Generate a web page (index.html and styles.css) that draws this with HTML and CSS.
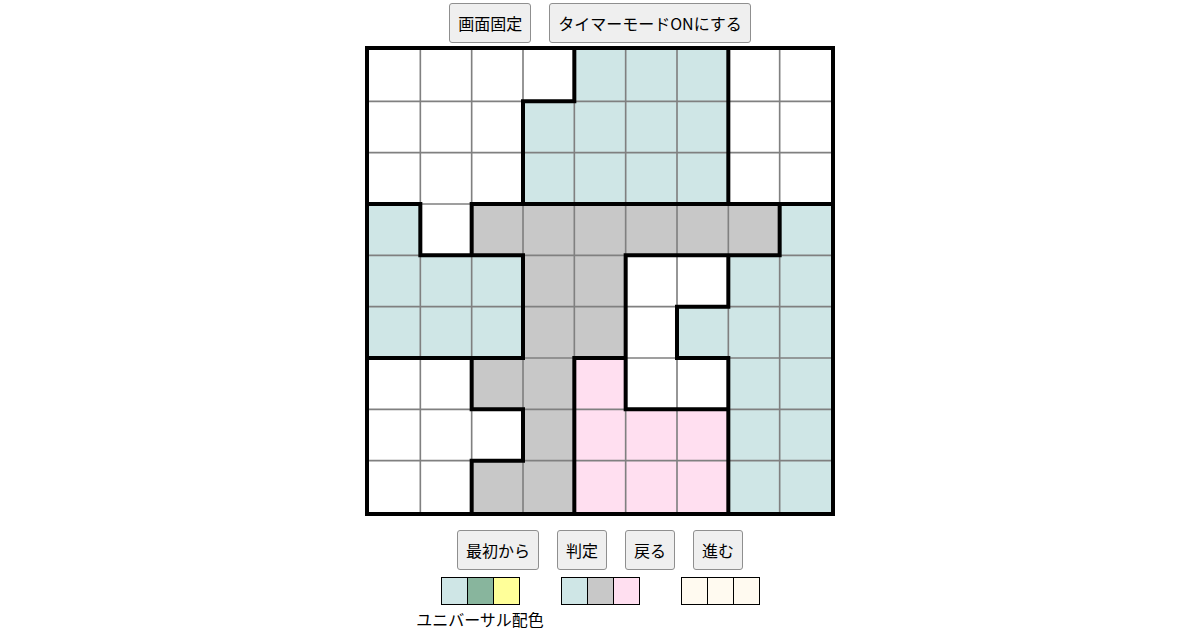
FILE: index.html
```html
<!DOCTYPE html>
<html lang="ja">
<head>
<meta charset="utf-8">
<title>パズル</title>
<link rel="stylesheet" href="styles.css">
</head>
<body>
<div class="page">
  <div class="toolbar top">
    <button class="btn">画面固定</button>
    <button class="btn">タイマーモードONにする</button>
  </div>

  <div class="board">
    <div class="cells">
      <div class="w"></div><div class="w"></div><div class="w"></div><div class="w"></div><div class="c"></div><div class="c"></div><div class="c"></div><div class="w"></div><div class="w"></div>
      <div class="w"></div><div class="w"></div><div class="w"></div><div class="c"></div><div class="c"></div><div class="c"></div><div class="c"></div><div class="w"></div><div class="w"></div>
      <div class="w"></div><div class="w"></div><div class="w"></div><div class="c"></div><div class="c"></div><div class="c"></div><div class="c"></div><div class="w"></div><div class="w"></div>
      <div class="c"></div><div class="w"></div><div class="g"></div><div class="g"></div><div class="g"></div><div class="g"></div><div class="g"></div><div class="g"></div><div class="c"></div>
      <div class="c"></div><div class="c"></div><div class="c"></div><div class="g"></div><div class="g"></div><div class="w"></div><div class="w"></div><div class="c"></div><div class="c"></div>
      <div class="c"></div><div class="c"></div><div class="c"></div><div class="g"></div><div class="g"></div><div class="w"></div><div class="c"></div><div class="c"></div><div class="c"></div>
      <div class="w"></div><div class="w"></div><div class="g"></div><div class="g"></div><div class="p"></div><div class="w"></div><div class="w"></div><div class="c"></div><div class="c"></div>
      <div class="w"></div><div class="w"></div><div class="w"></div><div class="g"></div><div class="p"></div><div class="p"></div><div class="p"></div><div class="c"></div><div class="c"></div>
      <div class="w"></div><div class="w"></div><div class="g"></div><div class="g"></div><div class="p"></div><div class="p"></div><div class="p"></div><div class="c"></div><div class="c"></div>
    </div>
    <svg class="lines" viewBox="0 0 9 9" preserveAspectRatio="none" aria-hidden="true">
      <path class="thin" d="M1 0V9M2 0V9M3 0V9M4 0V9M5 0V9M6 0V9M7 0V9M8 0V9M0 1H9M0 2H9M0 3H9M0 4H9M0 5H9M0 6H9M0 7H9M0 8H9"/>
      <path class="thick" d="M3 1H4M0 3H1M2 3H9M1 4H3M5 4H8M6 5H7M0 6H3M4 6H5M6 6H7M2 7H3M5 7H7M2 8H3M1 3V4M2 3V4M2 6V7M2 8V9M3 1V3M3 4V6M3 7V8M4 0V1M4 6V9M5 4V7M6 5V6M7 0V3M7 4V5M7 6V9M8 3V4"/>
    </svg>
  </div>

  <div class="toolbar bottom">
    <button class="btn">最初から</button>
    <button class="btn">判定</button>
    <button class="btn">戻る</button>
    <button class="btn">進む</button>
  </div>

  <div class="palettes">
    <div class="palette">
      <div class="swatches">
        <span class="sw sw-cyan"></span><span class="sw sw-green"></span><span class="sw sw-yellow"></span>
      </div>
      <div class="label">ユニバーサル配色</div>
    </div>
    <div class="palette">
      <div class="swatches">
        <span class="sw sw-cyan"></span><span class="sw sw-gray"></span><span class="sw sw-pink"></span>
      </div>
    </div>
    <div class="palette">
      <div class="swatches">
        <span class="sw sw-cream"></span><span class="sw sw-cream"></span><span class="sw sw-cream"></span>
      </div>
    </div>
  </div>
</div>
</body>
</html>
```

FILE: styles.css
```css
* { box-sizing: border-box; }

html, body {
  margin: 0;
  padding: 0;
  background: #ffffff;
}

body {
  font-family: "Noto Sans CJK JP", "Noto Sans", sans-serif;
  color: #000;
}

.page {
  width: 1200px;
  height: 630px;
  display: flex;
  flex-direction: column;
  align-items: center;
  overflow: hidden;
}

.toolbar {
  display: flex;
  gap: 18px;
}

.toolbar.top {
  margin-top: 3px;
}

.toolbar.bottom {
  margin-top: 14px;
}

.btn {
  height: 40px;
  padding: 0 8px;
  font-family: "Noto Sans CJK JP", "Noto Sans", sans-serif;
  font-size: 16px;
  line-height: 1;
  color: #000;
  background: #efefef;
  border: 1px solid #8f8f8f;
  border-radius: 3px;
}

.board {
  position: relative;
  margin-top: 3px;
  width: 470px;
  height: 470px;
  border: 4px solid #000;
}

.cells {
  display: grid;
  grid-template-columns: repeat(9, 1fr);
  grid-template-rows: repeat(9, 1fr);
  width: 100%;
  height: 100%;
}

.w { background: #ffffff; }
.c { background: #cfe6e6; }
.g { background: #c8c8c8; }
.p { background: #ffdff0; }

.lines {
  position: absolute;
  left: 0;
  top: 0;
  width: 100%;
  height: 100%;
  overflow: visible;
}

.thin {
  fill: none;
  stroke: #808080;
  stroke-width: 0.032;
}

.thick {
  fill: none;
  stroke: #000;
  stroke-width: 0.078;
  stroke-linecap: square;
}

.palettes {
  display: flex;
  margin-top: 7px;
}

.palette {
  width: 120px;
  display: flex;
  flex-direction: column;
  align-items: center;
}

.swatches {
  display: flex;
  border: 1px solid #000;
}

.sw {
  width: 26px;
  height: 26px;
  border-left: 1px solid #000;
}

.sw:first-child {
  width: 25px;
  border-left: none;
}

.sw-cyan { background: #cfe6e6; }
.sw-green { background: #88b59d; }
.sw-yellow { background: #ffff99; }
.sw-gray { background: #c8c8c8; }
.sw-pink { background: #ffdff0; }
.sw-cream { background: #fffaf0; }

.label {
  margin-top: 3px;
  white-space: nowrap;
  font-size: 16px;
  line-height: 22px;
}
```
